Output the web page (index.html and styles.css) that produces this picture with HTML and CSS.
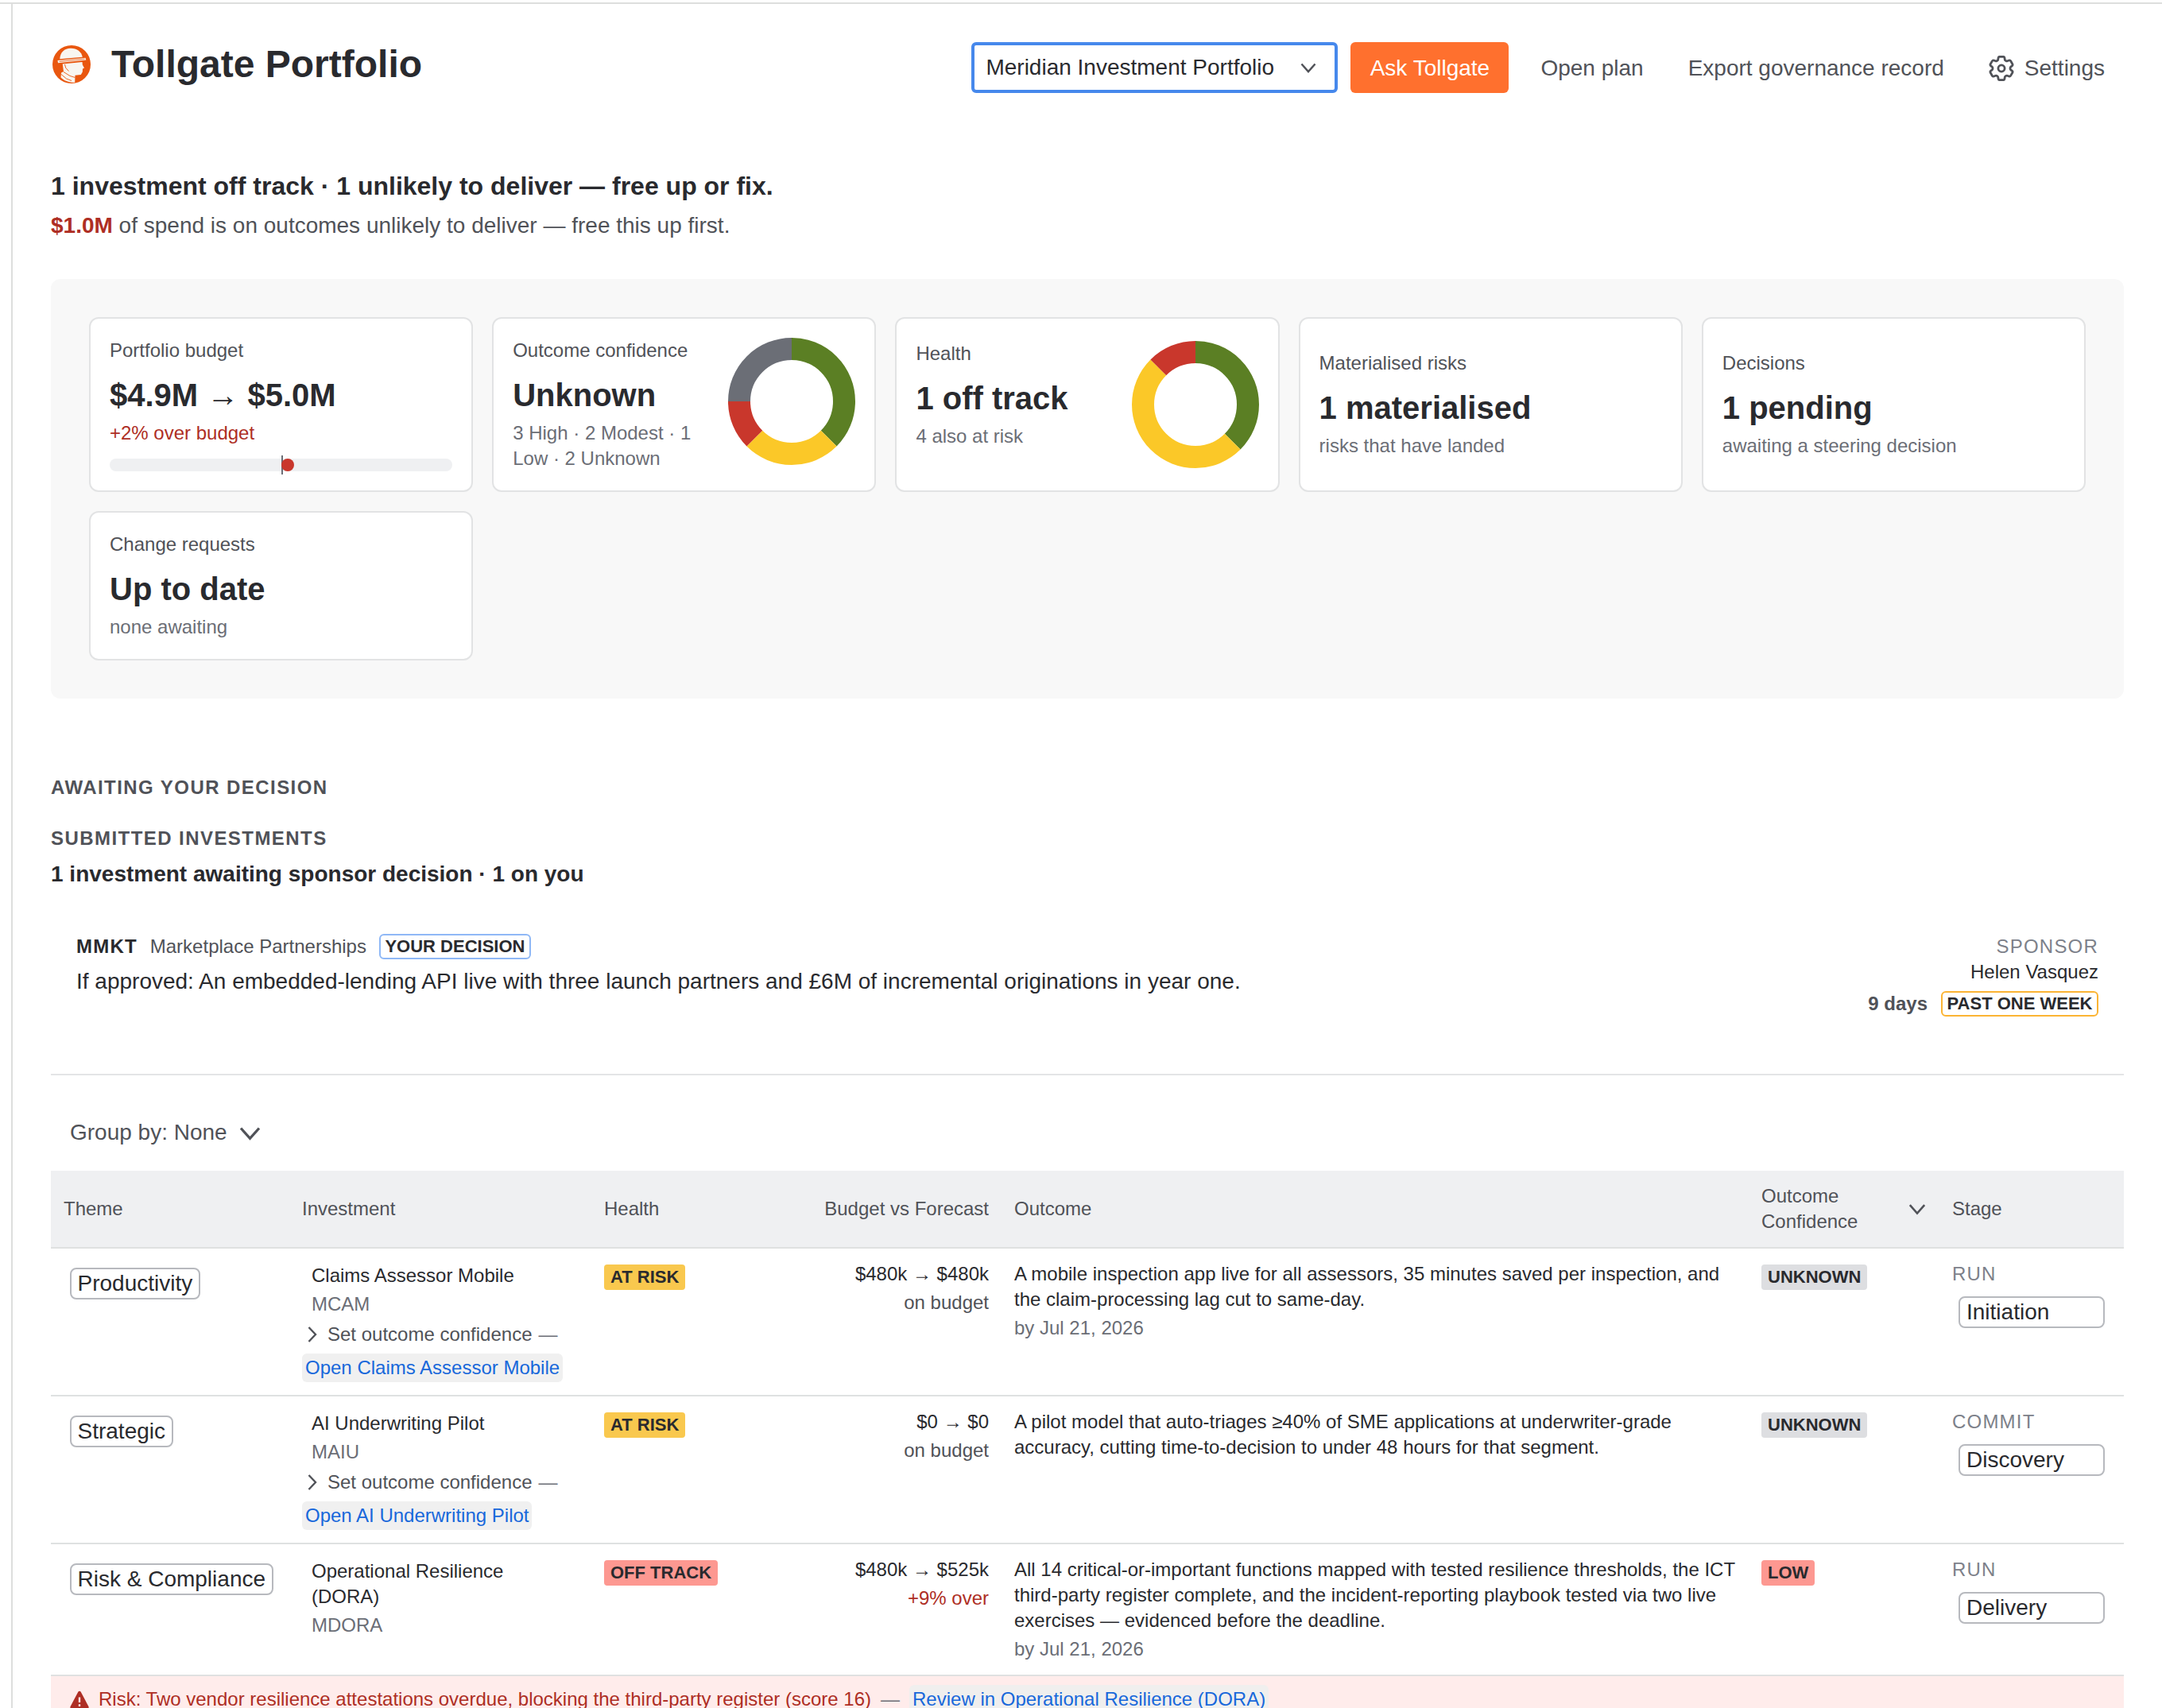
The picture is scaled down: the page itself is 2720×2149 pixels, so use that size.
FILE: index.html
```
<!DOCTYPE html>
<html lang="en">
<head>
<meta charset="utf-8">
<title>Tollgate Portfolio</title>
<link rel="stylesheet" href="styles.css">
</head>
<body>
<svg width="0" height="0" class="sprite" aria-hidden="true">
  <symbol id="chev-down" viewBox="0 0 32 32"><path d="M5.500 10.500 16 22.300 26.500 10.500" fill="none" stroke="currentColor" stroke-width="3"/></symbol>
  <symbol id="chev-right" viewBox="0 0 12 20"><path d="M1.500 1 10 10 1.500 19" fill="none" stroke="currentColor" stroke-width="2.400"/></symbol>
</svg>
<main class="page">
  <header class="header">
    <div class="brand">
      <svg class="logo" viewBox="0 0 48 48">
        <circle cx="24" cy="24" r="24" fill="#e9570f"/>
        <path d="M9.300 17.300C9.500 9 15 3.800 23 3.800c8 0 13.500 4.600 14.800 11Z" fill="#f8f6f1"/>
        <path d="M6.500 18.900 41.500 15.700 42.300 18.400 7 22.300Z" fill="#f8f6f1"/>
        <path d="M8.500 20.500 40.500 17.100" stroke="#e9570f" stroke-width=".8" fill="none"/>
        <path d="M12.700 23.400 37.500 21 37.800 24.500 40 28.500 38 29.600 37.800 33.500 35.800 37 28.500 37.800 28.200 46.800C21 47.200 14.500 44.500 10.500 40.500L11 34.500 14 33Z" fill="#f8f6f1"/>
        <path d="M15.500 24 16.800 28.500 20.500 32.500M11 36.500 17.500 42 24 44.500M14 33.500 22 38.500 28.500 40.500" stroke="#e9570f" stroke-width=".9" fill="none"/>
      </svg>
      <h1 class="title">Tollgate Portfolio</h1>
    </div>
    <nav class="actions">
      <button class="select"><span>Meridian Investment Portfolio</span><svg class="select-chev"><use href="#chev-down"/></svg></button>
      <button class="btn btn-primary">Ask Tollgate</button>
      <div class="links">
        <button class="btn">Open plan</button>
        <button class="btn">Export governance record</button>
        <button class="btn btn-icon">
          <svg class="gear" viewBox="2.200 2.200 19.600 19.600" fill="none" stroke="currentColor" stroke-width="1.700" stroke-linejoin="round"><path d="M9.594 3.940c.09-.542.56-.94 1.110-.94h2.593c.55 0 1.020.398 1.110.94l.213 1.281c.063.374.313.686.645.87.074.04.147.083.22.127.325.196.72.257 1.075.124l1.217-.456a1.125 1.125 0 0 1 1.370.49l1.296 2.247a1.125 1.125 0 0 1-.26 1.431l-1.003.827c-.293.241-.438.613-.43.992a7.723 7.723 0 0 1 0 .255c-.008.378.137.75.43.991l1.004.827c.424.35.534.955.26 1.430l-1.298 2.247a1.125 1.125 0 0 1-1.369.491l-1.217-.456c-.355-.133-.75-.072-1.076.124a6.470 6.470 0 0 1-.22.128c-.331.183-.581.495-.644.869l-.213 1.281c-.09.543-.56.94-1.110.94h-2.594c-.55 0-1.019-.398-1.110-.94l-.213-1.281c-.062-.374-.312-.686-.644-.87a6.520 6.520 0 0 1-.22-.127c-.325-.196-.72-.257-1.076-.124l-1.217.456a1.125 1.125 0 0 1-1.369-.49l-1.297-2.247a1.125 1.125 0 0 1 .26-1.431l1.004-.827c.292-.24.437-.613.43-.991a6.932 6.932 0 0 1 0-.255c.007-.38-.138-.751-.43-.992l-1.004-.827a1.125 1.125 0 0 1-.26-1.430l1.297-2.247a1.125 1.125 0 0 1 1.370-.491l1.216.456c.356.133.751.072 1.076-.124.072-.044.146-.086.22-.128.332-.183.582-.495.644-.869l.214-1.280Z"/><circle cx="12" cy="12" r="2.500"/></svg>
          Settings
        </button>
      </div>
    </nav>
  </header>

  <section class="summary">
    <h2 class="headline">1 investment off track · 1 unlikely to deliver — free up or fix.</h2>
    <p class="subline"><strong>$1.0M</strong> of spend is on outcomes unlikely to deliver — free this up first.</p>
  </section>

  <section class="panel">
    <article class="card">
      <div class="label">Portfolio budget</div>
      <div class="value">$4.9M → $5.0M</div>
      <div class="note over">+2% over budget</div>
      <div class="meter"><i class="meter-tick"></i><i class="meter-dot" style="left:52%"></i></div>
    </article>
    <article class="card">
      <div class="split">
        <div>
          <div class="label">Outcome confidence</div>
          <div class="value">Unknown</div>
          <div class="note">3 High · 2 Modest · 1 Low · 2 Unknown</div>
        </div>
        <svg class="donut" viewBox="0 0 160 160" fill="none" stroke-width="28">
          <g transform="rotate(-90 80 80)">
            <circle cx="80" cy="80" r="66" pathLength="8" stroke="#5b7f24" stroke-dasharray="3 5"/>
            <circle cx="80" cy="80" r="66" pathLength="8" stroke="#fbc828" stroke-dasharray="2 6" stroke-dashoffset="-3"/>
            <circle cx="80" cy="80" r="66" pathLength="8" stroke="#c9372c" stroke-dasharray="1 7" stroke-dashoffset="-5"/>
            <circle cx="80" cy="80" r="66" pathLength="8" stroke="#6b6e76" stroke-dasharray="2 6" stroke-dashoffset="-6"/>
          </g>
        </svg>
      </div>
    </article>
    <article class="card">
      <div class="split">
        <div>
          <div class="label">Health</div>
          <div class="value">1 off track</div>
          <div class="note">4 also at risk</div>
        </div>
        <svg class="donut" viewBox="0 0 160 160" fill="none" stroke-width="28">
          <g transform="rotate(-90 80 80)">
            <circle cx="80" cy="80" r="66" pathLength="8" stroke="#5b7f24" stroke-dasharray="3 5"/>
            <circle cx="80" cy="80" r="66" pathLength="8" stroke="#fbc828" stroke-dasharray="4 4" stroke-dashoffset="-3"/>
            <circle cx="80" cy="80" r="66" pathLength="8" stroke="#c9372c" stroke-dasharray="1 7" stroke-dashoffset="-7"/>
          </g>
        </svg>
      </div>
    </article>
    <article class="card">
      <div class="label">Materialised risks</div>
      <div class="value">1 materialised</div>
      <div class="note">risks that have landed</div>
    </article>
    <article class="card">
      <div class="label">Decisions</div>
      <div class="value">1 pending</div>
      <div class="note">awaiting a steering decision</div>
    </article>
    <article class="card">
      <div class="label">Change requests</div>
      <div class="value">Up to date</div>
      <div class="note">none awaiting</div>
    </article>
  </section>

  <section class="decisions">
    <h3 class="eyebrow">AWAITING YOUR DECISION</h3>
    <h4 class="eyebrow eyebrow-sub">SUBMITTED INVESTMENTS</h4>
    <p class="lead">1 investment awaiting sponsor decision · 1 on you</p>
    <div class="request">
      <div>
        <div class="request-head"><b class="code">MMKT</b><span>Marketplace Partnerships</span><span class="outline outline-info">YOUR DECISION</span></div>
        <p class="request-text">If approved: An embedded-lending API live with three launch partners and £6M of incremental originations in year one.</p>
      </div>
      <div class="sponsor">
        <div class="caps">SPONSOR</div>
        <div class="sponsor-name">Helen Vasquez</div>
        <div class="age"><b>9 days</b><span class="outline outline-warn">PAST ONE WEEK</span></div>
      </div>
    </div>
  </section>

  <button class="group">Group by: None<svg class="group-chev"><use href="#chev-down"/></svg></button>

  <section class="table">
    <div class="row head">
      <div>Theme</div><div>Investment</div><div>Health</div><div class="num">Budget vs Forecast</div><div>Outcome</div>
      <div class="sorted"><span>Outcome<br>Confidence</span><svg class="sort-chev"><use href="#chev-down"/></svg></div><div>Stage</div>
    </div>
    <div class="row">
      <div class="theme"><span class="tag">Productivity</span></div>
      <div>
        <div class="name">Claims Assessor Mobile</div>
        <div class="key">MCAM</div>
        <div class="todo"><svg class="todo-chev"><use href="#chev-right"/></svg>Set outcome confidence<span class="dash">—</span></div>
        <a class="link">Open Claims Assessor Mobile</a>
      </div>
      <div class="state"><span class="badge warn">AT RISK</span></div>
      <div class="num"><div>$480k → $480k</div><div class="delta">on budget</div></div>
      <div>A mobile inspection app live for all assessors, 35 minutes saved per inspection, and the claim-processing lag cut to same-day.<div class="date">by Jul 21, 2026</div></div>
      <div class="state"><span class="badge neutral">UNKNOWN</span></div>
      <div><div class="caps">RUN</div><span class="tag stage">Initiation</span></div>
    </div>
    <div class="row">
      <div class="theme"><span class="tag">Strategic</span></div>
      <div>
        <div class="name">AI Underwriting Pilot</div>
        <div class="key">MAIU</div>
        <div class="todo"><svg class="todo-chev"><use href="#chev-right"/></svg>Set outcome confidence<span class="dash">—</span></div>
        <a class="link">Open AI Underwriting Pilot</a>
      </div>
      <div class="state"><span class="badge warn">AT RISK</span></div>
      <div class="num"><div>$0 → $0</div><div class="delta">on budget</div></div>
      <div>A pilot model that auto-triages ≥40% of SME applications at underwriter-grade accuracy, cutting time-to-decision to under 48 hours for that segment.</div>
      <div class="state"><span class="badge neutral">UNKNOWN</span></div>
      <div><div class="caps">COMMIT</div><span class="tag stage">Discovery</span></div>
    </div>
    <div class="row">
      <div class="theme"><span class="tag">Risk &amp; Compliance</span></div>
      <div>
        <div class="name">Operational Resilience (DORA)</div>
        <div class="key">MDORA</div>
      </div>
      <div class="state"><span class="badge danger">OFF TRACK</span></div>
      <div class="num"><div>$480k → $525k</div><div class="delta over">+9% over</div></div>
      <div>All 14 critical-or-important functions mapped with tested resilience thresholds, the ICT third-party register complete, and the incident-reporting playbook tested via two live exercises — evidenced before the deadline.<div class="date">by Jul 21, 2026</div></div>
      <div class="state"><span class="badge danger">LOW</span></div>
      <div><div class="caps">RUN</div><span class="tag stage">Delivery</span></div>
    </div>
    <div class="alert">
      <svg class="alert-icon" viewBox="0 0 24 24"><path d="M10.300 1.800a2 2 0 0 1 3.400 0l9.800 18.400A2 2 0 0 1 21.800 23H2.200a2 2 0 0 1-1.700-2.800Z" fill="#ae2e24"/><path d="M12 8.500v6.500M12 17.300v2.600" stroke="#ffeceb" stroke-width="2.400"/></svg>
      <span>Risk: Two vendor resilience attestations overdue, blocking the third-party register (score 16)</span>
      <span class="dash">—</span>
      <a class="link">Review in Operational Resilience (DORA)</a>
    </div>
  </section>
</main>
</body>
</html>
```
FILE: styles.css
```
*{box-sizing:border-box;margin:0;padding:0}
html,body{height:2149px;overflow:hidden}
body{background:#fff;color:#292a2e;font-family:"Liberation Sans",Arial,sans-serif;font-size:24px;line-height:32px;padding-top:3px}
button{font:inherit;color:inherit;background:none;border:0;text-align:left}
.sprite{position:absolute}
.page{height:2146px;overflow:hidden;border-top:2px solid #dddedd;display:flex;flex-direction:column;padding:0 48px 0 64px;background:linear-gradient(#dddedd,#dddedd) 14px 0/2px 100% no-repeat}

.header{display:flex;justify-content:space-between;align-items:flex-start;padding-top:48px;height:209px;flex:none}
.brand{display:flex;padding-left:2px;gap:26px}
.logo{width:48px;height:48px;margin-top:4px}
.title{font-size:48px;line-height:56px;font-weight:700}
.actions{display:flex;gap:16px}
.select{width:461px;height:64px;border:4px solid #4688ec;border-radius:6px;padding:0 20px 0 14px;display:flex;align-items:center;justify-content:space-between;font-size:28px;line-height:40px}
.select-chev{width:26px;height:26px;color:#505258}
.links{display:flex;gap:8px}
.btn{height:64px;padding:1px 24px 0;font-size:28px;line-height:40px;color:#505258;border-radius:6px;white-space:nowrap}
.btn-primary{background:#ff702e;color:#fff;width:199px;text-align:center;padding:1px 0 0}
.btn-icon{display:flex;align-items:center;gap:13px}
.gear{width:32px;height:32px}

.headline{font-size:32px;line-height:40px}
.subline{font-size:28px;line-height:40px;margin-top:10px;color:#505258}
.subline strong{color:#ae2e24}

.panel{flex:none;margin-top:47px;background:#f8f8f8;border-radius:12px;padding:48px;display:grid;grid-template-columns:repeat(5,1fr);grid-template-rows:220px 188px;gap:24px}
.card{background:#fff;border:2px solid #e2e3e4;border-radius:12px;padding:24px;display:flex;flex-direction:column;justify-content:center}
.split{display:flex;justify-content:space-between;gap:24px;align-items:flex-start}
.donut{width:160px;height:160px;flex:none}
.label{color:#505258}
.value{font-size:40px;line-height:48px;font-weight:700;margin:16px 0 8px}
.note{color:#6b6e76}
.over,.note.over{color:#ae2e24}
.meter{position:relative;height:16px;margin-top:16px;border-radius:8px;background:#eff0f2}
.meter-tick{position:absolute;left:50%;top:-4px;width:2px;height:24px;background:#6b6e76}
.meter-dot{position:absolute;top:0;width:16px;height:16px;margin-left:-8px;border-radius:50%;background:#c9372c}

.decisions{flex:none;height:474px;padding-top:96px;border-bottom:2px solid #e4e5e6}
.eyebrow{font-size:24px;line-height:32px;letter-spacing:1.44px;color:#505258}
.eyebrow-sub{margin-top:32px}
.lead{font-size:28px;line-height:40px;font-weight:700;margin-top:8.500px}
.request{display:flex;justify-content:space-between;padding:55px 32px 0}
.request-head{display:flex;gap:16px;color:#505258}
.code{color:#292a2e;letter-spacing:1.200px}
.request-text{font-size:28px;line-height:40px;margin-top:8px}
.outline{height:32px;border:2px solid;border-radius:6px;padding:0 5.500px;font-size:22px;line-height:28px;font-weight:700;color:#292a2e}
.outline-info{border-color:#8fb8f6}
.outline-warn{border-color:#fbb434}
.sponsor{text-align:right}
.caps{letter-spacing:1.200px;color:#7d818a}
.age{display:flex;justify-content:flex-end;gap:17px;margin-top:8px;color:#505258}

.group{flex:none;align-self:flex-start;display:flex;align-items:center;margin:52px 0 0 24px;font-size:28px;line-height:40px;color:#505258;gap:11px}
.group-chev{width:35px;height:35px}

.table{flex:none;margin-top:28px}
.row{display:grid;grid-template-columns:300px 380px 256px 260px 940px 240px 232px;border-bottom:2px solid #dfe1e1}
.row>div{padding:16px}
.head{background:#eff0f2;color:#505258;height:98px;align-items:center}
.num{text-align:right}
.sorted{display:flex;justify-content:space-between;align-items:center}
.sort-chev{width:28px;height:28px;margin-right:-2px}
.row>.theme{padding:24px}
.tag{display:inline-block;height:40px;border:2px solid #b7b9be;border-radius:8px;padding:0 7.500px;font-size:28px;line-height:36px;white-space:nowrap;vertical-align:top}
.stage{width:184px;margin:12px 0 0 8px;padding:0 8px}
.name{padding:2px 12px 0}
.key{padding:0 12px;margin-top:4px;color:#6b6e76}
.todo{display:flex;align-items:center;margin:6px 0 8px 7px;color:#505258;white-space:nowrap}
.todo-chev{width:12px;height:20px;margin-right:13px}
.dash{color:#6b6e76;margin-left:8px}
.link{display:block;width:max-content;height:36px;line-height:36px;padding:0 4px;border-radius:6px;background:#f0f0f0;color:#1868db}
.row>.state{padding-top:20px}
.badge{display:inline-block;vertical-align:top;height:32px;padding:0 8px;border-radius:4px;font-size:22px;line-height:32px;font-weight:700}
.warn{background:#f9c84e}
.danger{background:#fd9891}
.neutral{background:#dddee1}
.delta{margin-top:4px;color:#505258}
.delta.over{color:#ae2e24}
.date{margin-top:4px;color:#6b6e76}
.alert{display:flex;background:#ffeceb;color:#ae2e24;padding:11px 24px 12px;height:72px;line-height:36px}
.alert-icon{width:24px;height:24px;margin:7px 12px 0 0}
.alert .dash{margin:0 12px}
.alert .link{background:#f0efee}
```
